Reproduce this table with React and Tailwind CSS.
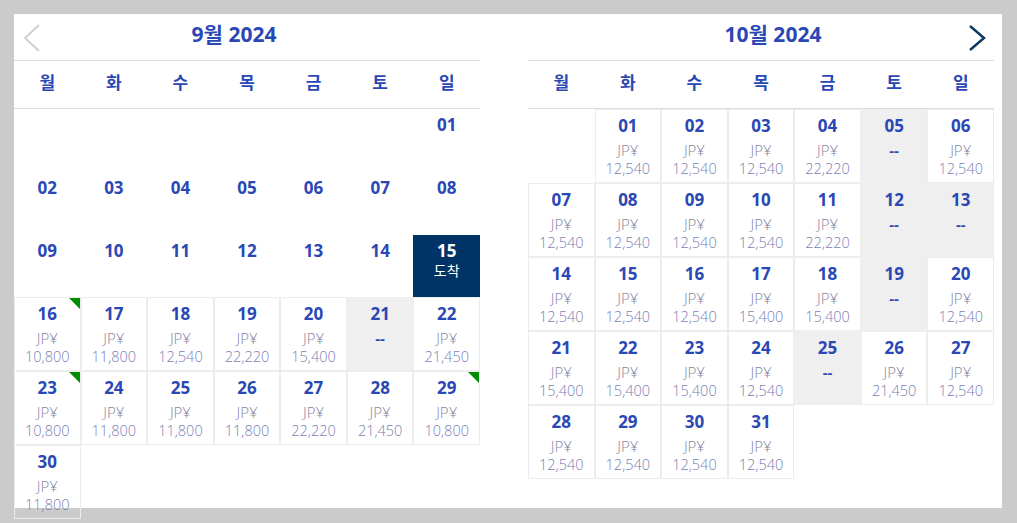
import React from 'react';

const FONT = { fontFamily: '"Open Sans", "Noto Sans CJK KR", sans-serif' };
const WEEKDAYS = ['월', '화', '수', '목', '금', '토', '일'];

// d: day, p: price, x: no fare, g: green flag, a: arrival
const sept = [
  { h: 'h-[63px]', cells: [null, null, null, null, null, null, { d: '01' }] },
  { h: 'h-[63px]', cells: ['02', '03', '04', '05', '06', '07', '08'].map(d => ({ d })) },
  { h: 'h-[62px]', cells: [...['09', '10', '11', '12', '13', '14'].map(d => ({ d })), { d: '15', a: true }] },
  {
    h: 'h-[74px]',
    cells: [
      { d: '16', p: '10,800', g: true },
      { d: '17', p: '11,800' },
      { d: '18', p: '12,540' },
      { d: '19', p: '22,220' },
      { d: '20', p: '15,400' },
      { d: '21', x: true },
      { d: '22', p: '21,450' },
    ],
  },
  {
    h: 'h-[74px]',
    cells: [
      { d: '23', p: '10,800', g: true },
      { d: '24', p: '11,800' },
      { d: '25', p: '11,800' },
      { d: '26', p: '11,800' },
      { d: '27', p: '22,220' },
      { d: '28', p: '21,450' },
      { d: '29', p: '10,800', g: true },
    ],
  },
  { h: 'h-[74px]', cells: [{ d: '30', p: '11,800' }, null, null, null, null, null, null] },
];

const oct = [
  [null, { d: '01', p: '12,540' }, { d: '02', p: '12,540' }, { d: '03', p: '12,540' }, { d: '04', p: '22,220' }, { d: '05', x: true }, { d: '06', p: '12,540' }],
  [{ d: '07', p: '12,540' }, { d: '08', p: '12,540' }, { d: '09', p: '12,540' }, { d: '10', p: '12,540' }, { d: '11', p: '22,220' }, { d: '12', x: true }, { d: '13', x: true }],
  [{ d: '14', p: '12,540' }, { d: '15', p: '12,540' }, { d: '16', p: '12,540' }, { d: '17', p: '15,400' }, { d: '18', p: '15,400' }, { d: '19', x: true }, { d: '20', p: '12,540' }],
  [{ d: '21', p: '15,400' }, { d: '22', p: '15,400' }, { d: '23', p: '15,400' }, { d: '24', p: '12,540' }, { d: '25', x: true }, { d: '26', p: '21,450' }, { d: '27', p: '12,540' }],
  [{ d: '28', p: '12,540' }, { d: '29', p: '12,540' }, { d: '30', p: '12,540' }, { d: '31', p: '12,540' }, null, null, null],
].map(cells => ({ h: 'h-[74px]', cells }));

const Day = ({ c }) => {
  if (!c) return <div />;
  if (c.a) {
    return (
      <div className="flex flex-col items-center bg-[#003466] pt-[5px]">
        <span className="text-[17px] font-bold leading-[22px] text-white">{c.d}</span>
        <span className="text-[14px] leading-[18px] text-white">도착</span>
      </div>
    );
  }
  if (!c.p && !c.x) {
    return (
      <div className="flex flex-col items-center pt-[5px]">
        <span className="text-[17px] font-bold leading-[22px] text-[#2a48b5]">{c.d}</span>
      </div>
    );
  }
  return (
    <div
      className={`relative flex flex-col items-center pt-[5px] border ${
        c.x ? 'bg-[#efefef] border-[#efefef]' : 'border-[#ededed]'
      }`}
    >
      {c.g && (
        <div className="absolute top-0 right-0 w-0 h-0 border-t-[11px] border-t-[#008c00] border-l-[11px] border-l-transparent" />
      )}
      <span className="text-[17px] font-bold leading-[22px] text-[#2a48b5]">{c.d}</span>
      {c.x ? (
        <span className="mt-[4px] text-[15px] font-bold leading-[18px] text-[#2a48b5]">--</span>
      ) : (
        <>
          <span className="mt-[4px] text-[15px] font-light leading-[18px] text-[#85859f]">JP¥</span>
          <span className="text-[14.5px] font-light leading-[20px] text-[#7a7eb5]">{c.p}</span>
        </>
      )}
    </div>
  );
};

const Calendar = ({ title, rows, side }) => (
  <div className="w-[466px] flex flex-col">
    <div className="h-[47px] shrink-0 flex items-center border-b border-[#dddddd]">
      {side === 'left' && (
        <svg width="20" height="28" viewBox="0 0 20 28" className="ml-[8px] mt-[2px]">
          <polyline points="17,1 3,14 17,27" fill="none" stroke="#cfcfcf" strokeWidth="2" />
        </svg>
      )}
      <div
        className={`flex-1 text-center text-[21px] font-bold text-[#2a48b5] pb-[5px] ${
          side === 'left' ? 'pr-[54px]' : 'pl-[51px]'
        }`}
      >
        {title}
      </div>
      {side === 'right' && (
        <svg width="20" height="28" viewBox="0 0 20 28" className="mr-[7px] mt-[2px]">
          <polyline points="3,2 17,14 3,26" fill="none" stroke="#0d3a63" strokeWidth="2.5" />
        </svg>
      )}
    </div>
    <div className="h-[48px] shrink-0 grid grid-cols-7 items-center pb-[4px] border-b border-[#dddddd]">
      {WEEKDAYS.map(w => (
        <div key={w} className="text-center text-[17px] font-bold text-[#2a48b5]">
          {w}
        </div>
      ))}
    </div>
    {rows.map((r, i) => (
      <div key={i} className={`grid grid-cols-7 shrink-0 ${r.h}`}>
        {r.cells.map((c, j) => (
          <Day key={j} c={c} />
        ))}
      </div>
    ))}
  </div>
);

export default function App() {
  return (
    <div className="min-h-[523px] bg-[#cbcbcb] pt-[14px] pl-[14px]" style={FONT}>
      <div className="w-[988px] h-[494px] bg-white flex items-start">
        <Calendar title="9월 2024" rows={sept} side="left" />
        <div className="ml-[48px]">
          <Calendar title="10월 2024" rows={oct} side="right" />
        </div>
      </div>
    </div>
  );
}
